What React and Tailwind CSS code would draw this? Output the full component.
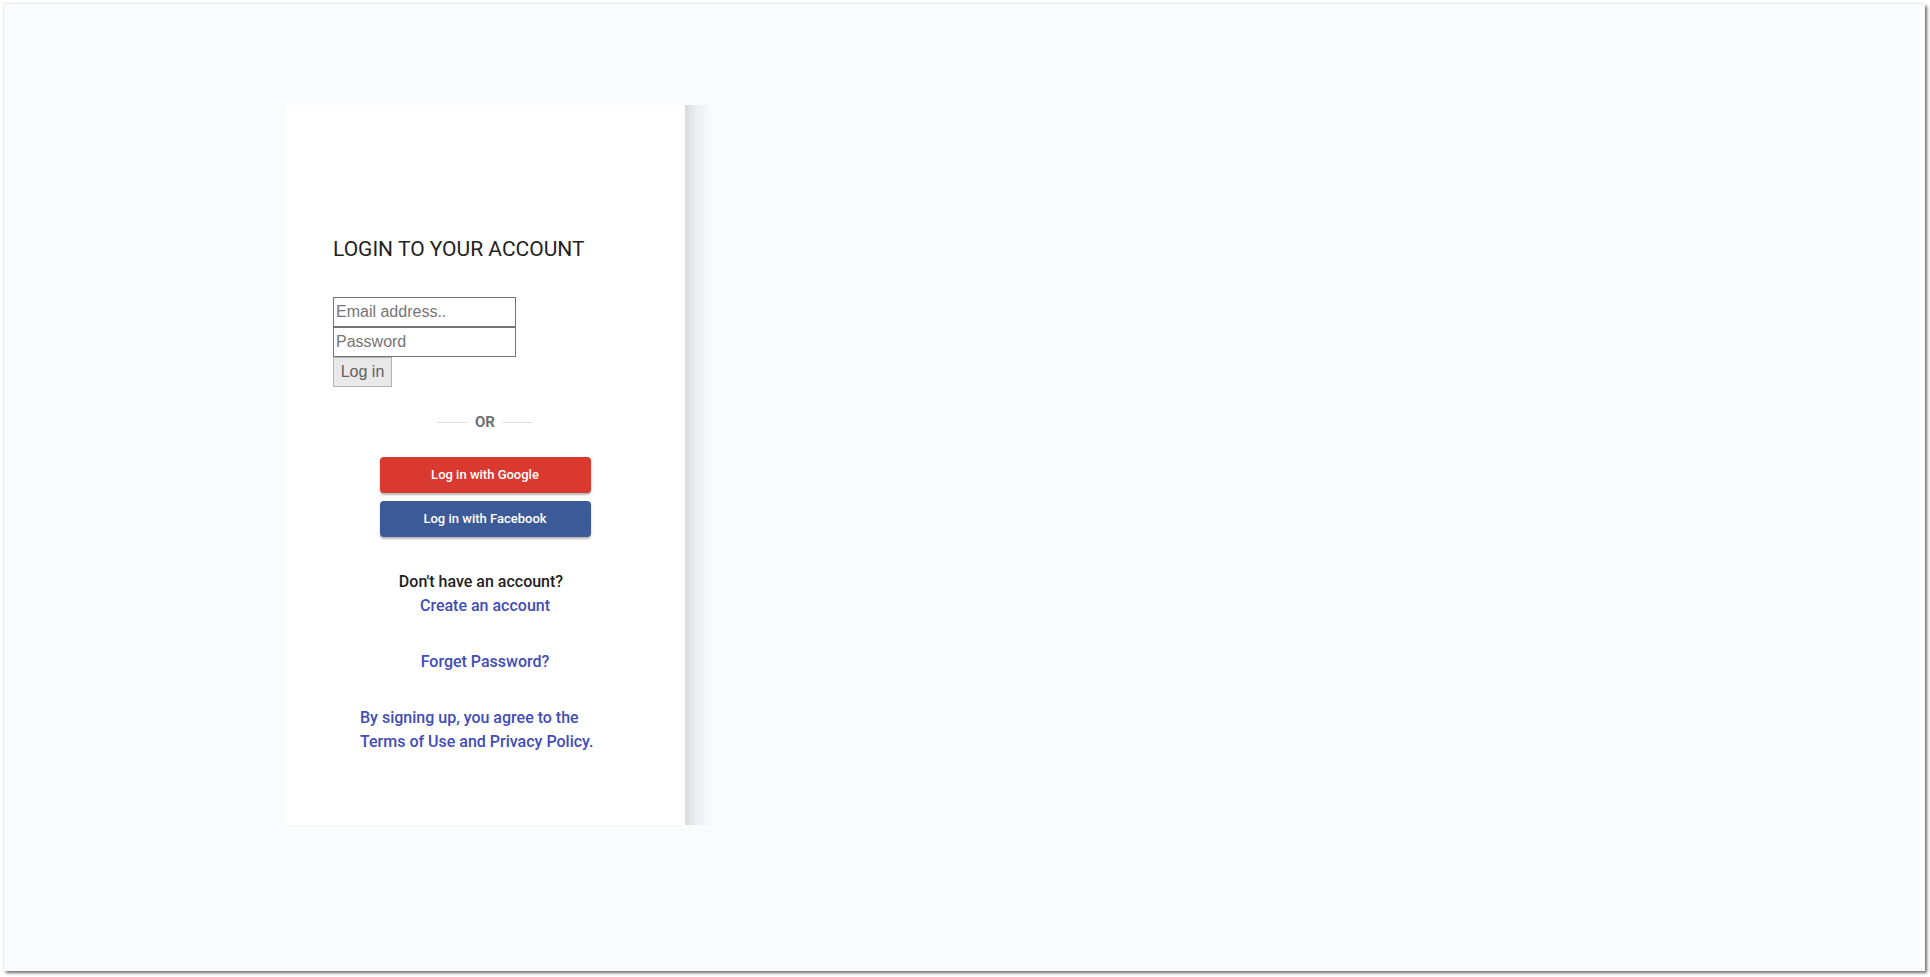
import React from 'react';

const roboto = { fontFamily: 'Roboto, "Noto Sans", sans-serif' };
const arial = { fontFamily: '"Liberation Sans", Arial, sans-serif' };

function OrDivider() {
  return (
    <div className="mt-[25px] h-[20px] flex items-center justify-center gap-[8px]">
      <span className="w-[30px] h-px bg-[#dedede]" />
      <span className="text-[15px] font-bold text-[#707070] leading-none">OR</span>
      <span className="w-[30px] h-px bg-[#dedede]" />
    </div>
  );
}

function SocialButton({ color, children, className = '' }) {
  return (
    <button
      type="button"
      className={`block mx-auto w-[211px] h-[36px] rounded-[4px] text-white text-[13px] font-medium shadow-[0_2px_2px_rgba(0,0,0,0.28)] ${color} ${className}`}
    >
      {children}
    </button>
  );
}

export default function App() {
  return (
    <div className="w-[1930px] h-[977px] bg-white pt-[4px] pl-[4px]" style={roboto}>
      <div className="w-[1921px] h-[967px] bg-[#fafbfd] shadow-[2px_2px_3px_rgba(0,0,0,0.55),0_0_3px_rgba(0,0,0,0.15)] pt-[101px] pl-[281px] flex items-start">
        <div className="w-[400px] h-[720px] bg-white pt-[132px]">
          <h1 className="px-[48px] text-[21px] leading-[25px] font-normal text-[#222]">
            LOGIN TO YOUR ACCOUNT
          </h1>

          <form className="mt-[35px] px-[48px]" style={arial} onSubmit={(e) => e.preventDefault()}>
            <input
              type="email"
              placeholder="Email address.."
              className="block w-[183px] h-[30px] border border-[#767676] px-[2px] text-[16px] text-[#222] placeholder:text-[#757575] outline-none"
            />
            <input
              type="password"
              placeholder="Password"
              className="block w-[183px] h-[30px] border border-[#767676] px-[2px] text-[16px] text-[#222] placeholder:text-[#757575] outline-none"
            />
            <button
              type="submit"
              className="block w-[59px] h-[30px] border border-[#b3b3b3] bg-[#e9e9e9] text-[16px] text-[#606060]"
            >
              Log in
            </button>
          </form>

          <OrDivider />

          <SocialButton color="bg-[#d9392f]" className="mt-[25px]">
            Log in with Google
          </SocialButton>
          <SocialButton color="bg-[#3d5a98]" className="mt-[8px]">
            Log in with Facebook
          </SocialButton>

          <div className="mt-[33px] text-center text-[16px] leading-[24px] font-medium">
            <p className="text-[#222] pr-[8px]">Don't have an account?</p>
            <a href="#" className="text-[#3f4db8]">Create an account</a>
          </div>

          <div className="mt-[32px] text-center text-[16px] leading-[24px] font-medium">
            <a href="#" className="text-[#3f4db8]">Forget Password?</a>
          </div>

          <p className="mt-[32px] pl-[75px] text-[16px] leading-[24px] font-medium text-[#3f4db8]">
            By signing up, you agree to the
            <br />
            Terms of Use and Privacy Policy.
          </p>
        </div>
        <div className="w-[26px] h-[720px] bg-[linear-gradient(to_right,rgba(0,0,0,0.13),rgba(0,0,0,0.05)_45%,rgba(0,0,0,0))]" />
      </div>
    </div>
  );
}
